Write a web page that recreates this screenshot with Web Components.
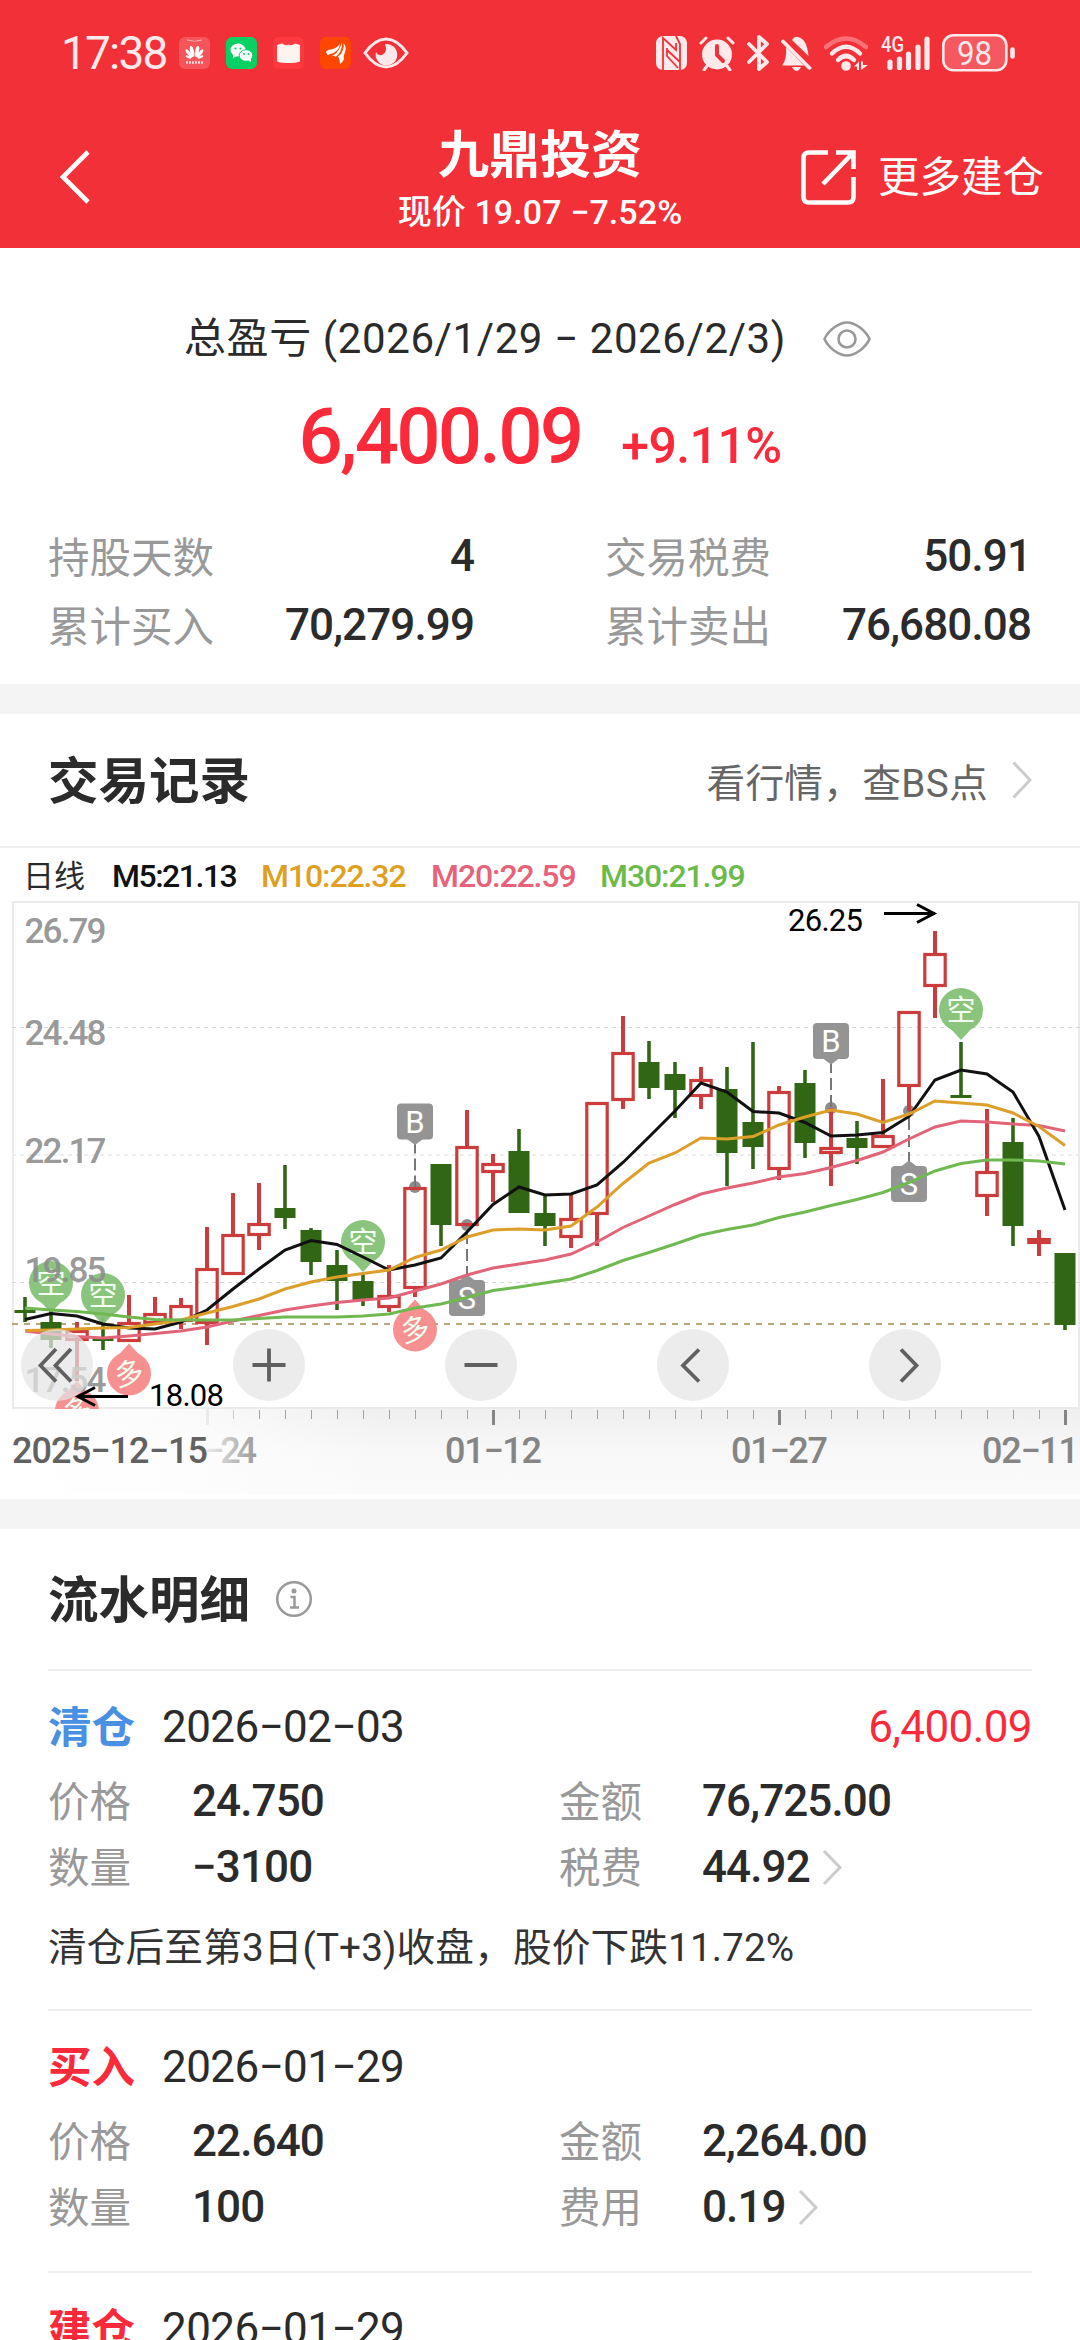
<!DOCTYPE html>
<html lang="zh-CN">
<head>
<meta charset="utf-8">
<meta name="viewport" content="width=device-width">
<title>九鼎投资</title>
<style>
  html, body {
    margin: 0;
    background: #fff;
  }

  body {
    width: 1080px;
    height: 2340px;
    overflow: hidden;
    font-family: Roboto, "Noto Sans CJK SC", sans-serif;
    color: #2b2b2b;
  }
</style>
</head>
<body>

<trade-page></trade-page>

<script>
// Small helper: attach an open shadow root and fill it with markup
function render (el, html) {
  const shadow = el.shadowRoot || el.attachShadow({ mode: 'open' });
  shadow.innerHTML = html;
}

/**
 * Phone status bar: clock, notification icons and system icons
 */
class StatusBar extends HTMLElement {
  connectedCallback () {
    render(this, `
    <style>
      :host {
        display: flex;
        align-items: center;
        height: 106px;
        padding: 0 65px 0 61px;
        color: #ffe9ea;
      }
      svg { display: block; flex: none; }
      .time {
        width: 118px;
        font-size: 46px;
        line-height: 106px;
        letter-spacing: -1.8px;
      }
      .apps { display: flex; align-items: center; gap: 16px; }
      .apps .eye { margin-left: -4px; }
      .system { display: flex; align-items: center; margin-left: auto; }
    </style>
    <div class="time">17:38</div>
    <div class="apps">
      <svg width="31" height="32" viewBox="0 0 31 32">
        <rect width="31" height="32" rx="6" fill="#f6545b"/>
        <path d="M8 3q7.500 2.500 15 0" fill="none" stroke="#ffb0b0" stroke-width="1"/>
        <g fill="#fff">
          <ellipse cx="13" cy="14.500" rx="1.900" ry="5.500" transform="rotate(-12 13 14.500)"/>
          <ellipse cx="18" cy="14.500" rx="1.900" ry="5.500" transform="rotate(12 18 14.500)"/>
          <ellipse cx="10" cy="16.500" rx="1.600" ry="5" transform="rotate(-38 10 16.500)"/>
          <ellipse cx="21" cy="16.500" rx="1.600" ry="5" transform="rotate(38 21 16.500)"/>
          <ellipse cx="9.500" cy="20" rx="1.200" ry="3" transform="rotate(-68 9.500 20)"/>
          <ellipse cx="21.500" cy="20" rx="1.200" ry="3" transform="rotate(68 21.500 20)"/>
        </g>
        <path d="M7 25.500h17" stroke="#ffdada" stroke-width="2.500" stroke-dasharray="2 1"/>
      </svg>
      <svg width="31" height="32" viewBox="0 0 31 32">
        <rect width="31" height="32" rx="6" fill="#07d162"/>
        <ellipse cx="12" cy="13" rx="7.500" ry="6.500" fill="#fff"/>
        <path d="M7 17l0 4 4-2z" fill="#fff"/>
        <ellipse cx="20" cy="18.500" rx="6.800" ry="5.800" fill="#fff" stroke="#07d162" stroke-width="1"/>
        <path d="M22 23l3 2v-4z" fill="#fff"/>
        <g fill="#07d162"><circle cx="9.500" cy="11.500" r="1.100"/><circle cx="14.500" cy="11.500" r="1.100"/>
        <circle cx="18" cy="17" r="1"/><circle cx="22.500" cy="17" r="1"/></g>
      </svg>
      <svg width="31" height="32" viewBox="0 0 31 32">
        <rect width="31" height="32" rx="6" fill="#fe3a40"/>
        <path d="M4 8l5-1.500q4 3 6.500 1 3 2 6.500-1l5 1.500v16.500q-6 2-11.500 1.500-6 .5-11.500-1.500z" fill="#fff3f0"/>
      </svg>
      <svg width="31" height="32" viewBox="0 0 31 32">
        <rect width="31" height="32" rx="6" fill="#fd4700"/>
        <g fill="#fff">
          <path d="M6 15q1-2 5-2.500 6-1 9-6-.5 9-12.500 11.500z"/>
          <path d="M11 19.500q8-3 11-14.500 .5 10-6.500 15-1.500-2-4.500-.5z"/>
          <path d="M22.500 14q2-3.500 1-8 3.500 4 1.500 9-2 4-1 7-1 3-4 5 .5-4-2-7.500 3-1.500 4.500-5.500z"/>
        </g>
      </svg>
      <svg class="eye" width="46" height="32" viewBox="0 0 46 32">
        <path d="M2 16Q12 2 23 2t21 14Q34 30 23 30T2 16z" fill="none" stroke="#ffe9ea" stroke-width="3"/>
        <path d="M22 7a10.800 10.800 0 1 1-9 8q2 4 6 3 6-3 3-11z" fill="#ffe9ea"/>
      </svg>
    </div>
    <div class="system">
      <svg width="31" height="34" viewBox="0 0 31 34">
        <rect width="31" height="34" rx="7" fill="#ffe9ea"/>
        <path d="M7 34V2L20 14V7M20 0L24 8V34M11 14L24 26M11 12V20L22 32" fill="none" stroke="#f23037" stroke-width="1.800"/>
      </svg>
      <svg width="36" height="35" viewBox="0 0 36 35" style="margin-left: 12px">
        <circle cx="18" cy="18.500" r="15" fill="#ffe9ea"/>
        <path d="M2 7l5-5M34 7l-5-5M8 30l-3 4M28 30l3 4" stroke="#ffe9ea" stroke-width="3" stroke-linecap="round"/>
        <path d="M18 10v9l6 6" fill="none" stroke="#f23037" stroke-width="4" stroke-linecap="round"/>
      </svg>
      <svg width="23" height="36" viewBox="0 0 23 36" style="margin-left: 12px">
        <path d="M2 9L20 27 12 34V2L20 9 2 27" fill="none" stroke="#ffe9ea" stroke-width="3.800" stroke-linecap="round" stroke-linejoin="round"/>
      </svg>
      <svg width="31" height="35" viewBox="0 0 31 35" style="margin-left: 11px">
        <path d="M5 11L23 29.500H1Q6 24 5 11zM11 4Q13.500 0 17 1 26 3 27.500 20zM11 31h9q-2 4-4.500 4T11 31z" fill="#ffe9ea"/>
        <path d="M2 5.500L28.500 32" stroke="#ffe9ea" stroke-width="3.800" stroke-linecap="round"/>
      </svg>
      <svg width="44" height="35" viewBox="0 0 44 35" style="margin-left: 12px">
        <path d="M2 11Q22-6 42 11" fill="none" stroke="#fb7077" stroke-width="4.500" stroke-linecap="round"/>
        <path d="M8 17.500Q22 4 36 17.500M14 24Q22 16 30 24" fill="none" stroke="#ffe9ea" stroke-width="4.500" stroke-linecap="round"/>
        <circle cx="22" cy="30" r="4.800" fill="#ffe9ea"/>
        <path d="M30 30.500l5-5v8.500h-2v-3.500zM37 34v-8.500h2v3.500h5z" fill="#ffe9ea"/>
      </svg>
      <svg width="50" height="36" viewBox="0 0 50 36" style="margin-left: 12px">
        <text x="1" y="17" font-family="Roboto" font-weight="500" font-size="22" textLength="23" lengthAdjust="spacingAndGlyphs" fill="#ffe9ea">4G</text>
        <path d="M10 27v5.500M19.500 24v8.500M28.500 19v13.500M38 12v20.500M47 4v28.500" stroke="#ffe9ea" stroke-width="5.200" stroke-linecap="round"/>
      </svg>
      <svg width="73" height="38" viewBox="0 0 73 38" style="margin-left: 12px">
        <rect x="1.300" y="1.300" width="63" height="35" rx="10" fill="#f5585f" stroke="#ffe9ea" stroke-width="2.600"/>
        <path d="M70.500 15.500v7" stroke="#ffe9ea" stroke-width="4.600" stroke-linecap="round"/>
        <text x="32.500" y="30.500" text-anchor="middle" font-family="Roboto" font-size="33.500" textLength="35" lengthAdjust="spacingAndGlyphs" fill="#ffe9ea">98</text>
      </svg>
    </div>
    `);
  }
}
customElements.define('status-bar', StatusBar);

/**
 * Title bar with the back arrow, the stock name (slot), its price and
 * the action on the right
 */
class NavBar extends HTMLElement {
  connectedCallback () {
    render(this, `
    <style>
      :host {
        display: grid;
        grid-template-columns: 1fr auto 1fr;
        align-items: center;
        height: 142px;
        padding: 0 36px 0 59px;
        color: #fff;
      }
      svg { display: block; }
      .title { text-align: center; margin-left: -23px; }
      .name { font-size: 51px; font-weight: 700; line-height: 60px; padding-top: 13px; }
      .price { font-size: 34px; font-weight: 500; line-height: 40px; padding-top: 6px; padding-bottom: 10px; letter-spacing: .1px; }
      .action { display: flex; align-items: center; justify-content: flex-end; gap: 22px; font-size: 41.500px; line-height: 60px; }
      .action span { padding-top: 2px; }
    </style>
    <svg width="32" height="56" viewBox="0 0 32 56">
      <path d="M29 3L4 28l25 25" fill="none" stroke="#fff" stroke-width="4.600"/>
    </svg>
    <div class="title">
      <div class="name"><slot></slot></div>
      <div class="price">${this.getAttribute('price')}</div>
    </div>
    <div class="action">
      <svg width="55" height="55" viewBox="0 0 55 55">
        <path d="M27 2.500H8Q2.500 2.500 2.500 8v39q0 5.500 5.500 5.500h39q5.500 0 5.500-5.500V27M35 2.500h17.500V19M51 4L22 34" fill="none" stroke="#fff" stroke-width="4.600"/>
      </svg>
      <span>更多建仓</span>
    </div>
    `);
  }
}
customElements.define('nav-bar', NavBar);

/**
 * Label on the left, value pushed to the right
 */
class StatItem extends HTMLElement {
  connectedCallback () {
    render(this, `
    <style>
      :host {
        display: flex;
        justify-content: space-between;
        height: 69px;
        line-height: 69px;
      }
      .label { font-size: 41.500px; line-height: 73px; color: #999; }
      .value { font-size: 44px; font-weight: 500; letter-spacing: -.9px; margin-right: -1px; }
    </style>
    <span class="label">${this.getAttribute('label')}</span>
    <span class="value"><slot></slot></span>
    `);
  }
}
customElements.define('stat-item', StatItem);

/**
 * Total profit block with four figures below it
 */
class ProfitSummary extends HTMLElement {
  connectedCallback () {
    render(this, `
    <style>
      :host { display: block; height: 436px; }
      svg { display: block; }
      .range {
        display: flex;
        align-items: center;
        justify-content: center;
        gap: 37px;
        padding-top: 58px;
        margin-right: 25px;
        font-size: 42px;
        line-height: 66px;
        letter-spacing: .6px;
      }
      .total {
        display: flex;
        align-items: baseline;
        justify-content: center;
        gap: 40px;
        margin-top: 15px;
        color: #fb2a3b;
        font-weight: 500;
        line-height: 100px;
      }
      .amount { font-size: 78px; letter-spacing: -2.8px; }
      .percent { font-size: 50px; letter-spacing: -.6px; }
      .stats {
        display: grid;
        grid-template-columns: 425px 425px;
        column-gap: 132px;
        padding: 26px 49px 0 48px;
      }
    </style>
    <div class="range">
      <span>总盈亏 (2026/1/29 − 2026/2/3)</span>
      <svg width="48" height="36" viewBox="0 0 48 36">
        <path d="M1.500 18Q4 12 11 6.500 18 1.500 24 1.500T37 6.500Q44 12 46.500 18 44 24 37 29.500 30 34.500 24 34.500T11 29.500Q4 24 1.500 18z" fill="none" stroke="#999" stroke-width="2.600"/>
        <circle cx="24" cy="18" r="8.500" fill="none" stroke="#999" stroke-width="2.600"/>
      </svg>
    </div>
    <div class="total">
      <span class="amount">6,400.09</span>
      <span class="percent">+9.11%</span>
    </div>
    <div class="stats">
      <stat-item label="持股天数">4</stat-item>
      <stat-item label="交易税费">50.91</stat-item>
      <stat-item label="累计买入">70,279.99</stat-item>
      <stat-item label="累计卖出">76,680.08</stat-item>
    </div>
    `);
  }
}
customElements.define('profit-summary', ProfitSummary);

/**
 * Grey gap and section title, the slot holds what follows the title
 */
class SectionTitle extends HTMLElement {
  connectedCallback () {
    render(this, `
    <style>
      :host {
        display: flex;
        align-items: center;
        border-top: 30px solid #f4f4f4;
        padding: 0 48px;
      }
      h2 { margin: 0; font-size: 50.500px; font-weight: 700; line-height: 80px; padding-top: 4px; }
      slot { display: flex; align-items: center; flex: 1; }
    </style>
    <h2>${this.getAttribute('text')}</h2>
    <slot></slot>
    `);
  }
}
customElements.define('section-title', SectionTitle);

/**
 * Daily candles with moving averages, trade markers and the zoom buttons
 */
class KlineChart extends HTMLElement {
  // One candle every 26px, each as [colour, high, top, bottom, low]
  static candles = [
    ['g', 1297, 1310, 1313, 1322], ['g', 1308, 1322, 1340, 1348], ['r', 1322, 1330, 1341, 1381],
    ['g', 1317, 1338, 1341, 1350], ['r', 1295, 1322, 1342, 1342], ['r', 1297, 1313, 1324, 1324],
    ['r', 1298, 1305, 1322, 1329], ['r', 1227, 1268, 1324, 1345], ['r', 1193, 1234, 1275, 1275],
    ['r', 1183, 1223, 1236, 1250], ['g', 1165, 1208, 1218, 1229], ['g', 1228, 1230, 1262, 1275],
    ['g', 1250, 1265, 1281, 1310], ['g', 1274, 1281, 1300, 1306], ['r', 1265, 1295, 1308, 1312],
    ['r', 1187, 1187, 1289, 1297], ['g', 1164, 1164, 1225, 1246], ['r', 1110, 1146, 1226, 1226],
    ['r', 1154, 1163, 1173, 1202], ['g', 1129, 1151, 1213, 1213], ['g', 1195, 1213, 1226, 1246],
    ['r', 1194, 1218, 1238, 1248], ['r', 1102, 1102, 1215, 1246], ['r', 1016, 1052, 1101, 1109],
    ['g', 1041, 1062, 1088, 1099], ['g', 1062, 1074, 1090, 1118], ['r', 1067, 1079, 1097, 1109],
    ['g', 1067, 1089, 1153, 1186], ['g', 1042, 1122, 1147, 1169], ['r', 1086, 1091, 1170, 1180],
    ['g', 1070, 1083, 1143, 1158], ['r', 1108, 1147, 1154, 1186], ['g', 1121, 1138, 1148, 1164],
    ['r', 1079, 1135, 1148, 1148], ['r', 1011, 1011, 1087, 1111], ['r', 931, 953, 987, 1018],
    ['g', 1042, 1095, 1098, 1098], ['r', 1109, 1171, 1197, 1216], ['g', 1118, 1142, 1226, 1246],
    ['r', 1230, 1238, 1244, 1256], ['g', 1253, 1253, 1325, 1330]
  ];

  static averages = {
    '#e26478': [1331, 1334, 1336.5, 1338, 1336, 1333.5, 1331, 1327, 1321, 1315.5, 1310, 1306, 1302.5, 1300, 1298,
      1291, 1284, 1275, 1268, 1264, 1260, 1254, 1242, 1227.5, 1216, 1204.5, 1194, 1188, 1183, 1177,
      1173.5, 1167.5, 1160.5, 1152, 1139, 1127, 1121, 1122, 1124, 1125.5, 1131],
    '#111': [1319.5, 1313.5, 1316, 1324, 1328, 1329, 1322, 1310, 1289, 1269, 1250, 1240.5, 1244.5, 1257, 1270,
      1265, 1258, 1232, 1204.5, 1187, 1195, 1194, 1185, 1162.5, 1137, 1111, 1083, 1092, 1111.5, 1113,
      1122.5, 1136, 1135, 1132.5, 1116.5, 1080, 1070, 1074, 1092, 1136.5, 1210],
    '#dc9f2a': [1330.5, 1330, 1329, 1328, 1327.5, 1324, 1320, 1313, 1306.5, 1299, 1289, 1282, 1277, 1273.5, 1270,
      1257.5, 1250, 1237, 1230, 1229, 1230, 1226, 1207, 1183.5, 1163, 1153, 1138, 1139, 1136.5, 1125,
      1117, 1110, 1114, 1122.5, 1114, 1101, 1103, 1105, 1113, 1126.5, 1145.5],
    '#6fb950': [1308, 1310, 1311.5, 1314, 1317, 1319.5, 1320, 1320, 1320, 1318.5, 1317, 1317, 1317, 1316, 1314,
      1308, 1304, 1297.5, 1290.5, 1287, 1283, 1279, 1270.5, 1260.5, 1252.5, 1244, 1235, 1229.5, 1225, 1217.5,
      1212, 1205.5, 1199.5, 1192.5, 1182.5, 1171, 1163.5, 1160, 1160, 1161, 1164]
  };

  candle ([color, high, top, bottom, low], i) {
    const x = 25 + 26 * i;
    if (color === 'g') {
      return `<path d="M${x} ${high}V${low}" stroke="#316614" stroke-width="3.600"/>
        <rect x="${x - 10.5}" y="${top}" width="21" height="${bottom - top}" fill="#316614"/>`;
    }
    return `<path d="M${x} ${high}V${top + 1}M${x} ${bottom - 1}V${low}" stroke="#cd3c3c" stroke-width="4"/>
      <rect x="${x - 10.2}" y="${top + 1.5}" width="20.400" height="${Math.max(bottom - top - 3, 2)}" fill="none" stroke="#cd3c3c" stroke-width="3.200"/>`;
  }

  // dir is 1 when the label sits above its point and -1 when it is below
  marker (text, x, y, dot, dir) {
    return `<circle cx="${x}" cy="${dot}" r="6" fill="#8d8d8d"/>
      <path d="M${x} ${y + 20 * dir}V${dot}" stroke="#777" stroke-width="2" stroke-dasharray="12 5"/>
      <rect x="${x - 18}" y="${y - 18}" width="36" height="36" rx="4" fill="#949494"/>
      <path d="M${x - 8} ${y + 17.5 * dir}h16l-8 ${6 * dir}z" fill="#949494"/>
      <text x="${x}" y="${y + 11}" text-anchor="middle" font-size="31" fill="#fff">${text}</text>`;
  }

  pin (text, x, y, dir) {
    return `<g opacity=".95"><circle cx="${x}" cy="${y}" r="22" fill="${dir > 0 ? '#85c177' : '#f78b8b'}"/>
      <path d="M${x - 11} ${y + 18 * dir}L${x} ${y + 30 * dir}L${x + 11} ${y + 18 * dir}z" fill="${dir > 0 ? '#85c177' : '#f78b8b'}"/>
      <text x="${x}" y="${y + 10.5}" text-anchor="middle" font-size="29" fill="#f2fff0"${dir < 0 ? ` transform="rotate(-12 ${x} ${y})"` : ''}>${text}</text></g>`;
  }

  connectedCallback () {
    const { candles, averages } = KlineChart;
    const lines = Object.entries(averages).map(([color, ys]) =>
      `<polyline points="${ys.map((y, i) => `${25 + 26 * i},${y}`).join(' ')}" fill="none" stroke="${color}" stroke-width="3"/>`).join('');
    const scale = [['26.79', 943], ['24.48', 1045], ['22.17', 1163], ['19.85', 1281.5], ['17.54', 1391.5]].map(([t, y]) =>
      `<text x="24.500" y="${y}" textLength="82">${t}</text>`).join('');
    const ticks = candles.map((c, i) => i > 7 && (i - 7) % 11
      ? `<path d="M${25.5 + 26 * i} 1410v9" stroke="${i < 9 ? '#ccc' : '#a2a2a2'}" stroke-width="1"/>` : '').join('');

    render(this, `
    <style>
      :host { display: block; border-top: 2px solid #f0f0f0; height: 651px; }
      .legend {
        display: grid;
        grid-template-columns: 89px 149px 170px 169px 1fr;
        height: 53px;
        line-height: 57px;
        padding-left: 23px;
        font-size: 32px;
        font-weight: 500;
        letter-spacing: -1.1px;
      }
      .legend span { white-space: nowrap; }
      .legend span:first-child { font-size: 31px; font-weight: 400; letter-spacing: 0; }
      .legend span:nth-child(2) { letter-spacing: -1.5px; }
      .plot { display: grid; }
      .plot > * { grid-area: 1 / 1; }
      svg { display: block; }
      .buttons {
        display: flex;
        gap: 140px;
        align-self: start;
        padding: 428px 0 0 21px;
      }
      .buttons span {
        width: 72px;
        height: 72px;
        border-radius: 50%;
        background: rgba(228, 228, 228, .72);
      }
    </style>
    <div class="legend">
      <span>日线</span>
      <span style="color: #111">M5:21.13</span>
      <span style="color: #dfa022">M10:22.32</span>
      <span style="color: #e8627a">M20:22.59</span>
      <span style="color: #6cbb4a">M30:21.99</span>
    </div>
    <div class="plot">
      <svg width="1080" height="597" viewBox="0 901 1080 597" font-family="Roboto, 'Noto Sans CJK SC', sans-serif">
        <defs>
          <linearGradient id="axis" x2="0" y2="1">
            <stop offset="0" stop-color="#efefef"/><stop offset=".5" stop-color="#f8f8f8"/><stop offset="1" stop-color="#fafafa"/>
          </linearGradient>
          <linearGradient id="fade">
            <stop offset="0" stop-color="#fff"/><stop offset=".45" stop-color="#fff" stop-opacity=".75"/><stop offset="1" stop-color="#fff" stop-opacity="0"/>
          </linearGradient>
          <linearGradient id="label">
            <stop offset="0" stop-color="#f0f0f0"/><stop offset="1" stop-color="#999"/>
          </linearGradient>
          <clipPath id="frame"><rect x="12" y="902" width="1068" height="507"/></clipPath>
        </defs>
        <rect y="1409" width="1080" height="85" fill="url(#axis)"/>
        <rect y="1409" width="380" height="85" fill="url(#fade)"/>
        <path d="M13 1408V902H1079V1408z" fill="none" stroke="#ebebeb" stroke-width="2"/>
        <path d="M12 1027.500H1080M12 1282.500H1080" stroke="#d8d8d8" stroke-width="1" stroke-dasharray="4 4"/>
        <path d="M12 1155H1080" stroke="#ededed" stroke-width="2" stroke-dasharray="4 4"/>
        <path d="M12 1324H1050" stroke="#b9a87c" stroke-width="2" stroke-dasharray="6 6"/>
        <g clip-path="url(#frame)">
          ${this.marker('B', 415, 1121.5, 1187, 1)}
          ${this.marker('S', 467, 1298, 1225, -1)}
          ${this.marker('B', 831, 1041, 1108, 1)}
          ${this.marker('S', 909, 1184, 1111, -1)}
          ${candles.map((c, i) => this.candle(c, i)).join('')}
          ${this.pin('空', 51, 1283, 1)}
          ${this.pin('空', 103, 1295, 1)}
          ${this.pin('空', 363, 1242, 1)}
          ${this.pin('空', 961, 1010, 1)}
          ${this.pin('多', 77, 1411, -1)}
          ${this.pin('多', 129, 1373.5, -1)}
          ${this.pin('多', 415, 1329.5, -1)}
          ${lines}
        </g>
        <g font-size="35" font-weight="500" fill="#8c8c8c" fill-opacity=".9">${scale}</g>
        ${ticks}
        <path d="M207.500 1409v16" stroke="#ebebeb" stroke-width="3"/>
        <path d="M493.500 1410v15M779.500 1410v15M1065.500 1410v15" stroke="#858585" stroke-width="3"/>
        <g font-size="36" font-weight="500">
          <text x="12" y="1463" textLength="196" fill="#626262">2025−12−15</text>
          <text x="204" y="1463" textLength="53" fill="url(#label)">−24</text>
          <g fill="#858585">
            <text x="445" y="1463" textLength="97">01−12</text>
            <text x="731" y="1463" textLength="97">01−27</text>
            <text x="982" y="1463" textLength="97">02−11</text>
          </g>
        </g>
      </svg>
      <div class="buttons"><span></span><span></span><span></span><span></span><span></span></div>
      <svg width="1080" height="597" viewBox="0 901 1080 597" font-family="Roboto, sans-serif">
        <g fill="none" stroke="#606060" stroke-width="3.800">
          <path d="M56 1349L40.500 1365.500L56 1381.500M71 1349L55.500 1365.500L71 1381.500"/>
          <path d="M252.500 1365h33M269 1348.500v33M464.500 1365h33"/>
          <path d="M699 1349.500L683 1365.500L699 1381.500M901 1349.500L916.500 1365.500L901 1381.500"/>
        </g>
        <g fill="none" stroke="#000" stroke-width="3">
          <path d="M884 913.500h51M917 904.500L934 913.500L917 922.500"/>
          <path d="M128 1396.500H78M95 1387.500L78 1396.500L95 1405.500"/>
        </g>
        <g font-size="31" fill="#000">
          <text x="788" y="931" textLength="75">26.25</text>
          <text x="149" y="1406" textLength="75">18.08</text>
        </g>
      </svg>
    </div>
    `);
  }
}
customElements.define('kline-chart', KlineChart);

/**
 * One record of the transaction list
 * Attributes: type, color, date, profit, price, count, amount, fee-label, fee, note
 */
class TradeEntry extends HTMLElement {
  connectedCallback () {
    const get = name => this.getAttribute(name) || '';
    const fields = !get('price') ? '' : `
    <div class="fields">
      <span class="label">价格</span><span>${get('price')}</span>
      <span class="label">金额</span><span>${get('amount')}</span>
      <span class="label">数量</span><span>${get('count')}</span>
      <span class="label">${get('fee-label')}</span>
      <span class="fee">${get('fee')}<svg width="22" height="37" viewBox="0 0 22 37"><path d="M2 2l16 16.500L2 35" fill="none" stroke="#ccc" stroke-width="3"/></svg></span>
    </div>`;
    const note = get('note') ? `<p>${get('note')}</p>` : '';

    render(this, `
    <style>
      :host {
        display: block;
        margin: 0 48px;
        border-top: 2px solid #eee;
        padding: 23px 0 31px;
        font-size: 44px;
        line-height: 66px;
        letter-spacing: -.6px;
      }
      header { display: flex; height: 66px; }
      .type { width: 114px; font-size: 43.500px; font-weight: 700; line-height: 70px; letter-spacing: 0; color: ${get('color')}; }
      .profit { margin-left: auto; color: #fb2a3b; letter-spacing: -.6px; }
      .fields {
        display: grid;
        grid-template-columns: 144px 367px 143px 1fr;
        grid-auto-rows: 66px;
        padding-top: 8px;
        font-weight: 500;
        letter-spacing: -.9px;
      }
      .label { font-size: 41.500px; font-weight: 400; line-height: 70px; letter-spacing: 0; color: #999; }
      .fee { display: flex; align-items: center; gap: 12px; }
      p { margin: 18px 0 0; font-size: 38.700px; line-height: 60px; letter-spacing: .1px; color: #333; }
    </style>
    <header>
      <span class="type">${get('type')}</span>
      <span>${get('date')}</span>
      <span class="profit">${get('profit')}</span>
    </header>
    ${fields}
    ${note}
    `);
  }
}
customElements.define('trade-entry', TradeEntry);

/**
 * The whole page
 */
class TradePage extends HTMLElement {
  connectedCallback () {
    render(this, `
    <style>
      :host { display: block; }
      .top { background: #f23037; }
      .record { height: 132px; }
      .detail { height: 140px; }
      .link { display: flex; align-items: center; margin-left: auto; gap: 24px; color: #666; font-size: 38.700px; letter-spacing: .3px; }
      .info { display: block; margin-left: 25px; }
    </style>
    <div class="top">
      <status-bar></status-bar>
      <nav-bar price="现价 19.07 −7.52%">九鼎投资</nav-bar>
    </div>
    <profit-summary></profit-summary>
    <section-title class="record" text="交易记录">
      <div class="link">
        <span>看行情，查BS点</span>
        <svg width="20" height="38" viewBox="0 0 20 38"><path d="M1.500 1.500L18 19 1.500 36.500" fill="none" stroke="#ccc" stroke-width="3"/></svg>
      </div>
    </section-title>
    <kline-chart></kline-chart>
    <section-title class="detail" text="流水明细">
      <svg class="info" width="38" height="38" viewBox="0 0 38 38">
        <circle cx="19" cy="19" r="16.800" fill="none" stroke="#999" stroke-width="2.500"/>
        <circle cx="19" cy="11" r="2.500" fill="#999"/>
        <path d="M15.500 17H19.500V27.500M15 27.500H24" fill="none" stroke="#999" stroke-width="2.500"/>
      </svg>
    </section-title>
    <trade-entry type="清仓" color="#4a90e2" date="2026−02−03" profit="6,400.09" price="24.750" amount="76,725.00"
      count="−3100" fee-label="税费" fee="44.92" note="清仓后至第3日(T+3)收盘，股价下跌11.72%"></trade-entry>
    <trade-entry type="买入" color="#fb2a3b" date="2026−01−29" price="22.640" amount="2,264.00"
      count="100" fee-label="费用" fee="0.19"></trade-entry>
    <trade-entry type="建仓" color="#fb2a3b" date="2026−01−29"></trade-entry>
    `);
  }
}
customElements.define('trade-page', TradePage);
</script>
</body>
</html>
